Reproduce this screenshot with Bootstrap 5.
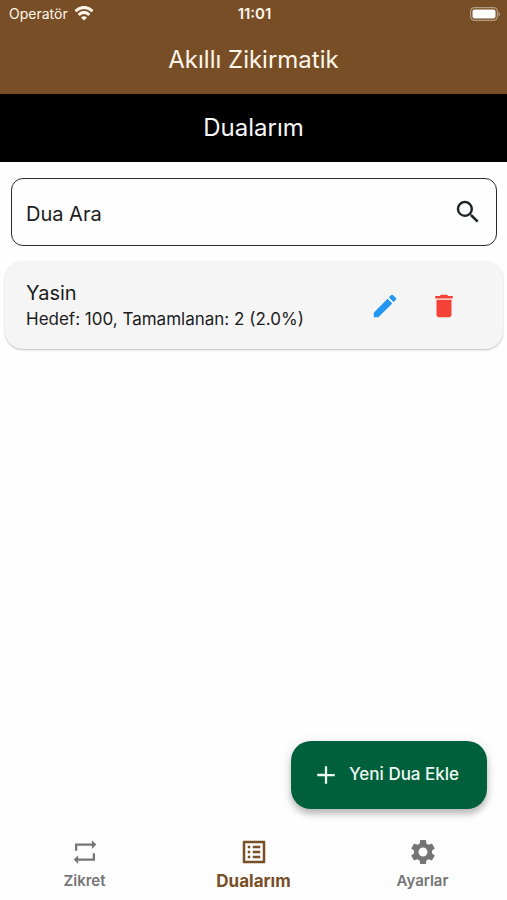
<!DOCTYPE html>
<html lang="tr">
<head>
<meta charset="utf-8">
<meta name="viewport" content="width=device-width, initial-scale=1">
<title>Akıllı Zikirmatik</title>
<link href="https://cdn.jsdelivr.net/npm/bootstrap@5.3.0/dist/css/bootstrap.min.css" rel="stylesheet">
<style>
  body { font-family: Inter, "Liberation Sans", sans-serif; color: #1c1c1c; background: #fefefe; }
  svg { display: block; flex: none; fill: currentColor; }
  .app-head { background: #784e26; color: #fff6ea; }
  .status-row { height: 27px; padding: 0 7px 0 9px; font-size: 14px; line-height: 27px; }
  .status-side { flex: 1 1 0; gap: 6px; }
  .status-time { font-size: 15px; }
  .wifi { fill: none; stroke: currentColor; stroke-width: 2.8; }
  .app-title { height: 67px; font-size: 24px; }
  .page-title { height: 68px; font-size: 24px; color: #f7f7f7; }
  .search-box { margin: 16px 10px 15px 11px; height: 68px; border: 1px solid #2b2b2b; border-radius: 12px; padding: 0 13px 0 14px; }
  .search-box input, .search-box input:focus { font-size: 20px; color: #1c1c1c; background: none; box-shadow: none; }
  .search-box input::placeholder { color: #1c1c1c; opacity: 1; }
  .dua-card { margin: 0 4px 0 5px; height: 88px; border-radius: 18px; background: #f5f5f5; box-shadow: 0 1px 2px rgba(0,0,0,.25); padding: 2px 44px 0 21px; }
  .dua-name { font-size: 20px; line-height: 26px; }
  .dua-info { font-size: 17px; line-height: 26px; }
  .row-actions { gap: 29px; }
  .edit-btn, .edit-btn:hover { color: #2196f3; }
  .delete-btn, .delete-btn:hover { color: #f44336; }
  .add-btn, .add-btn:hover { margin: 0 20px 16px; padding: 0 20px; height: 68px; min-width: 196px; border: 0; border-radius: 20px; background: #00603c; color: #eefaf3; font-size: 17px; font-weight: 500; box-shadow: 0 5px 6px rgba(0,0,0,.22), 0 2px 14px rgba(0,0,0,.1); }
  .bottom-nav { height: 75px; padding-top: 12px; background: #fdfdfd; font-weight: 600; font-size: 15px; line-height: 28px; }
  .bottom-nav a { color: #757575; }
  .bottom-nav a.active { color: #784e26; font-size: 17px; font-weight: 700; }
</style>
</head>
<body>
<div class="d-flex flex-column min-vh-100">
  <header class="app-head">
    <div class="status-row d-flex align-items-center">
      <div class="status-side d-flex align-items-center">
        <span>Operatör</span>
        <svg class="wifi" width="20" height="15" viewBox="0 0 18 14" aria-hidden="true"><path d="M1 4.800Q9-2.100 17 4.800M4 8.200Q9 3.800 14 8.200"/><path d="M9 13.500 6.200 10.700Q9 8.600 11.800 10.700Z" fill="currentColor" stroke="none"/></svg>
      </div>
      <span class="status-time fw-semibold">11:01</span>
      <div class="status-side d-flex justify-content-end">
        <svg width="30" height="14" viewBox="0 0 30 14" aria-hidden="true"><rect x=".6" y=".6" width="26.800" height="12.800" rx="4" fill="none" stroke="#b59c82" stroke-width="1.200"/><rect x="2.500" y="2.500" width="23" height="9" rx="2" fill="#fff"/><path d="M28.500 4.800Q30 5.200 30 7T28.500 9.200Z" fill="#b59c82"/></svg>
      </div>
    </div>
    <h1 class="app-title d-flex align-items-center justify-content-center m-0 fw-normal">Akıllı Zikirmatik</h1>
  </header>
  <h2 class="page-title bg-black d-flex align-items-center justify-content-center m-0 fw-normal">Dualarım</h2>

  <main class="flex-grow-1 d-flex flex-column">
    <form class="search-box d-flex align-items-center" role="search">
      <input class="form-control border-0 p-0 pt-1" type="text" placeholder="Dua Ara" aria-label="Dua Ara">
      <button class="btn border-0 p-0" type="button" aria-label="Ara">
        <svg width="30" height="30" viewBox="0 0 24 24" fill="#000"><path d="M15.500 14h-.79l-.28-.27A6.470 6.470 0 0 0 16 9.500 6.500 6.500 0 1 0 9.500 16c1.610 0 3.090-.59 4.230-1.570l.27.28v.79l5 4.990L20.490 19l-4.990-5zm-6 0C7.010 14 5 11.990 5 9.500S7.010 5 9.500 5 14 7.010 14 9.500 11.990 14 9.500 14z"/></svg>
      </button>
    </form>

    <article class="dua-card d-flex align-items-center">
      <div class="flex-grow-1">
        <div class="dua-name">Yasin</div>
        <div class="dua-info">Hedef: 100, Tamamlanan: 2 (2.0%)</div>
      </div>
      <div class="row-actions d-flex">
        <button class="btn edit-btn border-0 p-0" type="button" aria-label="Düzenle">
          <svg width="30" height="30" viewBox="0 0 24 24"><path d="M3 17.460v3.040c0 .28.22.5.5.5h3.040c.13 0 .26-.05.35-.15L17.810 9.940l-3.750-3.750L3.150 17.100c-.1.1-.15.22-.15.36zM20.710 7.040a1 1 0 0 0 0-1.410l-2.340-2.340a1 1 0 0 0-1.410 0l-1.830 1.830 3.750 3.750 1.830-1.830z"/></svg>
        </button>
        <button class="btn delete-btn border-0 p-0" type="button" aria-label="Sil">
          <svg width="30" height="30" viewBox="0 0 24 24"><path d="M6 19c0 1.100.9 2 2 2h8c1.100 0 2-.9 2-2V7H6v12zM19 4h-3.500l-1-1h-5l-1 1H5v2h14V4z"/></svg>
        </button>
      </div>
    </article>

    <button class="btn add-btn mt-auto align-self-end d-flex align-items-center gap-2" type="button">
      <svg width="30" height="30" viewBox="0 0 24 24"><path d="M19 12.900h-6.100V19h-1.800v-6.100H5v-1.800h6.100V5h1.800v6.100H19z"/></svg>
      Yeni Dua Ekle
    </button>
  </main>

  <nav class="bottom-nav d-flex text-center">
    <a href="#" class="col text-decoration-none d-flex flex-column align-items-center">
      <svg width="30" height="30" viewBox="0 0 24 24"><path d="M4 11V5.100H17.500V2.500L21 6l-3.500 3.500V6.900H5.800V11zM20 13v5.900H6.500v2.600L3 18l3.500-3.500v2.600h11.700V13z"/></svg>
      Zikret
    </a>
    <a href="#" class="active col text-decoration-none d-flex flex-column align-items-center" aria-current="page">
      <svg width="30" height="30" viewBox="0 0 24 24"><path d="M19 5v14H5V5h14m1.100-2H3.900c-.5 0-.9.4-.9.9v16.200c0 .4.4.9.9.9h16.200c.4 0 .9-.5.9-.9V3.900c0-.5-.5-.9-.9-.9zM11 7h6v2h-6V7zm0 4h6v2h-6v-2zm0 4h6v2h-6zM7 7h2v2H7zm0 4h2v2H7zm0 4h2v2H7z"/></svg>
      Dualarım
    </a>
    <a href="#" class="col text-decoration-none d-flex flex-column align-items-center">
      <svg width="30" height="30" viewBox="0 0 24 24"><path d="M19.140 12.940c.04-.3.060-.61.060-.94 0-.32-.02-.64-.07-.94l2.030-1.580c.18-.14.23-.41.12-.61l-1.920-3.320c-.12-.22-.37-.29-.59-.22l-2.390.96c-.5-.38-1.030-.7-1.620-.94l-.36-2.540c-.04-.24-.24-.41-.48-.41h-3.840c-.24 0-.43.17-.47.41l-.36 2.540c-.59.24-1.130.57-1.620.94l-2.390-.96c-.22-.08-.47 0-.59.22L2.740 8.870c-.12.21-.08.47.12.61l2.030 1.580c-.05.3-.09.63-.09.94s.02.64.07.94l-2.030 1.580c-.18.14-.23.41-.12.61l1.920 3.320c.12.22.37.29.59.22l2.390-.96c.5.38 1.030.7 1.620.94l.36 2.540c.05.24.24.41.48.41h3.840c.24 0 .44-.17.47-.41l.36-2.540c.59-.24 1.130-.56 1.620-.94l2.390.96c.22.08.47 0 .59-.22l1.920-3.320c.12-.22.070-.47-.12-.61l-2.010-1.580zM12 15.600c-1.980 0-3.600-1.620-3.600-3.600s1.620-3.600 3.600-3.600 3.600 1.620 3.600 3.600-1.620 3.600-3.600 3.600z"/></svg>
      Ayarlar
    </a>
  </nav>
</div>
<script src="https://cdn.jsdelivr.net/npm/bootstrap@5.3.0/dist/js/bootstrap.bundle.min.js"></script>
</body>
</html>
